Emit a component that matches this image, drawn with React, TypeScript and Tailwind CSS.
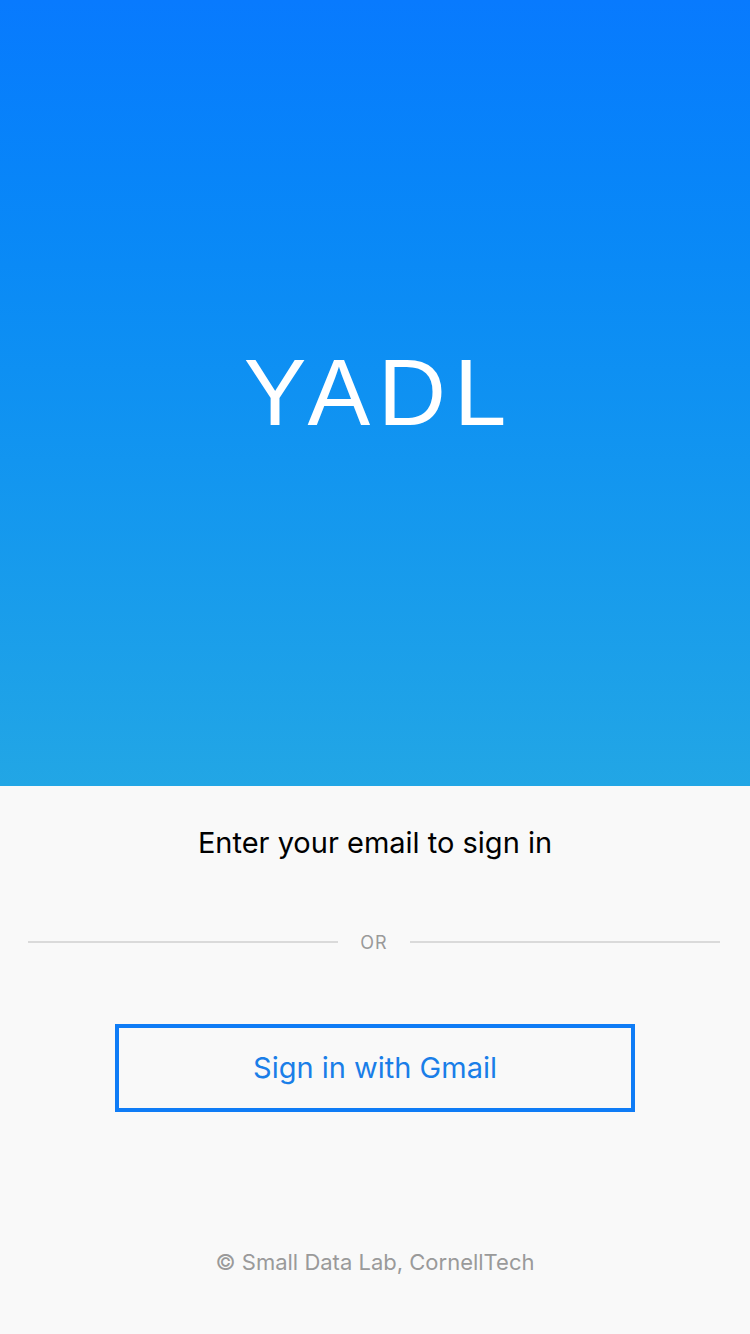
export default function App() {
  return (
    <div className="w-[750px] h-[1334px] flex flex-col bg-[#f9f9f9]" style={{ fontFamily: "Inter, 'Liberation Sans', sans-serif" }}>
      <div className="h-[786px] flex items-center justify-center bg-gradient-to-b from-[#087afe] to-[#22a6e5]">
        <div className="text-white text-[94px] leading-none font-normal tracking-[8px] pl-[8px] mb-[1px]" style={{ fontFamily: "'Liberation Sans', sans-serif" }}>YADL</div>
      </div>
      <div className="flex flex-col items-center pt-[39px]">
        <div className="text-[29px] leading-[36px] text-black">Enter your email to sign in</div>
        <div className="w-full flex items-center pl-[28px] pr-[30px] mt-[69px] h-[24px]">
          <div className="flex-1 h-[2px] bg-[#dadada]" />
          <div className="w-[72px] text-center text-[18px] text-[#9a9a9a] tracking-[1px]">OR</div>
          <div className="flex-1 h-[2px] bg-[#dadada]" />
        </div>
        <div className="mt-[70px] w-[520px] h-[88px] border-4 border-[#0f7cf6] flex items-center justify-center">
          <span className="text-[29px] text-[#1a7ee8]">Sign in with Gmail</span>
        </div>
        <div className="mt-[135px] text-[22px] leading-[30px] text-[#9a9a9a]">© Small Data Lab, CornellTech</div>
      </div>
    </div>
  );
}
